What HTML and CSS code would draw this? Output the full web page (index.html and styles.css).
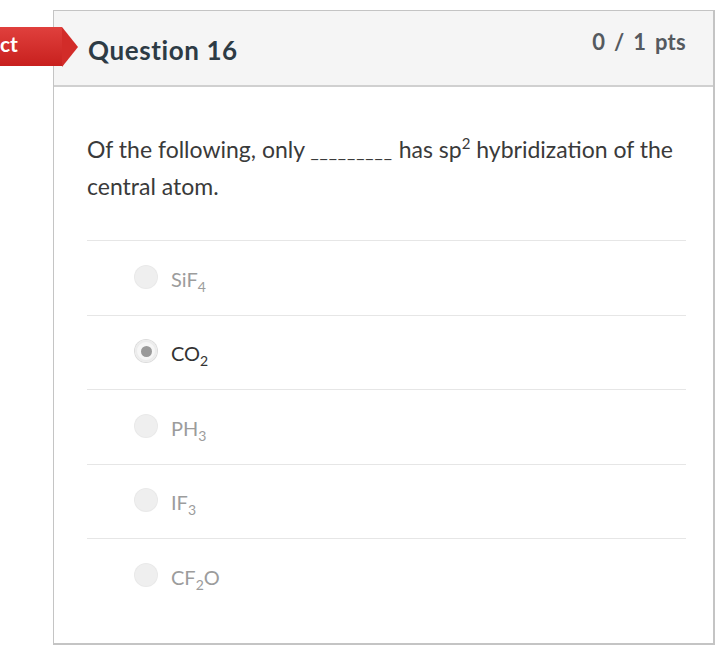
FILE: index.html
```html
<!DOCTYPE html>
<html>
<head>
<meta charset="utf-8">
<link rel="stylesheet" href="styles.css">
</head>
<body>
<div class="page">
  <div class="flag"><span class="flag-text">ct</span></div>
  <div class="card">
    <div class="card-header">
      <h2 class="title">Question 16</h2>
      <div class="pts">0 / 1 pts</div>
    </div>
    <div class="card-body">
      <p class="question">Of the following, only <span class="blank">_________</span> has sp<sup>2</sup> hybridization of the central atom.</p>
      <div class="answers">
        <div class="answer"><span class="radio"></span><span class="label">SiF<sub>4</sub></span></div>
        <div class="answer selected"><span class="radio"><span class="dot"></span></span><span class="label">CO<sub>2</sub></span></div>
        <div class="answer"><span class="radio"></span><span class="label">PH<sub>3</sub></span></div>
        <div class="answer"><span class="radio"></span><span class="label">IF<sub>3</sub></span></div>
        <div class="answer"><span class="radio"></span><span class="label">CF<sub>2</sub>O</span></div>
      </div>
    </div>
  </div>
</div>
</body>
</html>
```
FILE: styles.css
```css
html, body {
  margin: 0;
  padding: 0;
  background: #ffffff;
  font-family: Lato, "Open Sans", sans-serif;
}
.page {
  position: relative;
  padding: 10px 0 0 53px;
  width: 720px;
  height: 647px;
  box-sizing: border-box;
}
.card {
  width: 662px;
  height: 635px;
  box-sizing: border-box;
  border: 1px solid #c4c4c4;
  border-bottom-width: 2px;
  border-right-width: 2px;
  background: #fff;
}
.card-header {
  height: 76px;
  box-sizing: border-box;
  background: #f5f5f5;
  border-bottom: 2px solid #d0d0d0;
  display: flex;
  justify-content: space-between;
  align-items: flex-start;
  padding: 0 27px 0 34px;
}
.title {
  margin: 22px 0 0;
  font-size: 26px;
  font-weight: 700;
  color: #2d3b45;
  line-height: 34px;
  letter-spacing: 0.6px;
}
.pts {
  margin-top: 16px;
  font-size: 22px;
  font-weight: 700;
  color: #555a5f;
  line-height: 30px;
  word-spacing: 3px;
  letter-spacing: 0.3px;
}
.card-body {
  padding: 45px 27px 0 33px;
}
.question {
  margin: 0;
  font-size: 23px;
  line-height: 35px;
  color: #3a3a3a;
}
.question sup {
  font-size: 15px;
  line-height: 0;
  vertical-align: 9px;
}
.blank {
  font-size: 18px;
  letter-spacing: 0.9px;
}
.answers {
  margin-top: 36px;
}
.answer {
  height: 73.5px;
  border-top: 1px solid #e6e6e6;
  display: flex;
  align-items: center;
  padding-left: 48px;
}
.radio {
  width: 22px;
  height: 22px;
  border-radius: 50%;
  background: #efefef;
  box-shadow: 0 0 0 1px #e9e9e9;
  display: flex;
  align-items: center;
  justify-content: center;
  margin-right: 14px;
  position: relative;
  top: -1px;
}
.answer.selected .radio {
  background: #f6f6f6;
  box-shadow: 0 0 0 1px #dcdcdc, inset 0 0 0 2px #ececec;
}
.dot {
  width: 11px;
  height: 11px;
  border-radius: 50%;
  background: #9a9a9a;
}
.label {
  font-size: 20px;
  color: #9c9c9c;
  position: relative;
  top: 1px;
}
.answer.selected .label {
  color: #333333;
}
.label sub {
  font-size: 14px;
  line-height: 0;
  vertical-align: -5px;
}
.flag {
  position: absolute;
  left: 0;
  top: 27px;
  width: 62px;
  height: 39px;
  background: linear-gradient(#e0403d, #c8201e);
}
.flag::after {
  content: "";
  position: absolute;
  left: 62px;
  top: 0;
  border-top: 20px solid transparent;
  border-bottom: 20px solid transparent;
  border-left: 16px solid #d22c29;
}
.flag-text {
  position: absolute;
  left: 0;
  top: 4px;
  color: #fff;
  font-size: 21px;
  font-weight: 700;
}
```
